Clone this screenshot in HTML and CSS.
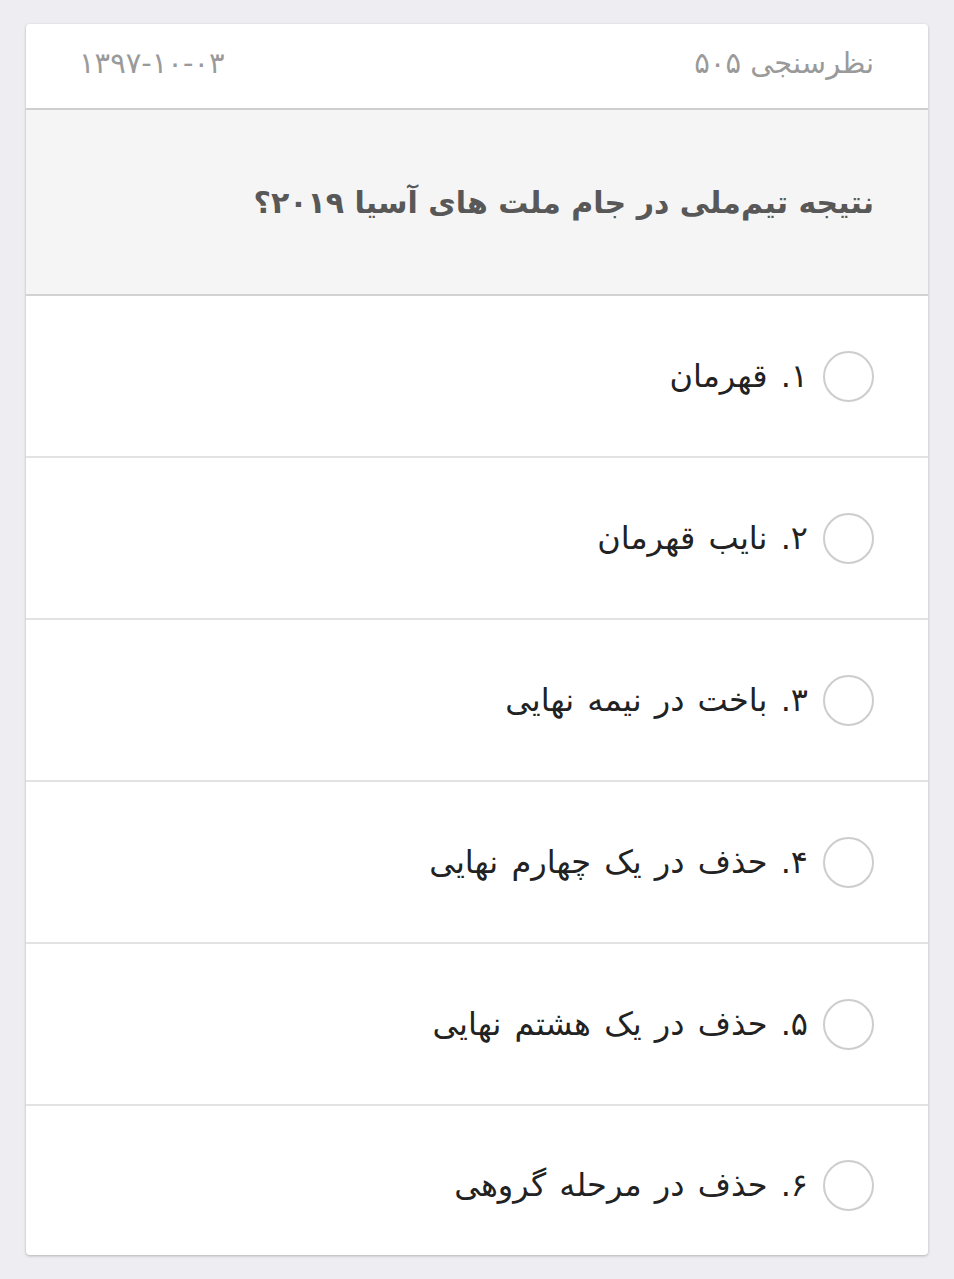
FILE: index.html
```html
<!DOCTYPE html>
<html lang="fa" dir="rtl">
<head>
    <meta charset="UTF-8">
    <meta name="viewport" content="width=device-width, initial-scale=1.0">
    <title>نظرسنجی ۵۰۵</title>
    <link rel="stylesheet" href="styles.css">
</head>
<body>
    <div class="card">
        <div class="card-header">
            <span class="poll-title">نظرسنجی ۵۰۵</span>
            <span class="poll-date">۱۳۹۷-۱۰-۰۳</span>
        </div>

        <div class="question">
            <h2>نتیجه تیم‌ملی در جام ملت های آسیا ۲۰۱۹؟</h2>
        </div>

        <ul class="options">
            <li class="option"><span class="radio"></span><span class="label">۱. قهرمان</span></li>
            <li class="option"><span class="radio"></span><span class="label">۲. نایب قهرمان</span></li>
            <li class="option"><span class="radio"></span><span class="label">۳. باخت در نیمه نهایی</span></li>
            <li class="option"><span class="radio"></span><span class="label">۴. حذف در یک چهارم نهایی</span></li>
            <li class="option"><span class="radio"></span><span class="label">۵. حذف در یک هشتم نهایی</span></li>
            <li class="option"><span class="radio"></span><span class="label">۶. حذف در مرحله گروهی</span></li>
        </ul>
    </div>
</body>
</html>
```

FILE: styles.css
```css
* {
    box-sizing: border-box;
    margin: 0;
    padding: 0;
    font-family: "DejaVu Sans", "Noto Sans", sans-serif;
}

body {
    background: #eeeef2;
    padding: 24px 26px;
}

.card {
    background: #fff;
    border-radius: 4px;
    box-shadow: 0 1px 3px rgba(0, 0, 0, 0.25);
    overflow: hidden;
}

.card-header {
    height: 86px;
    display: flex;
    justify-content: space-between;
    align-items: center;
    padding: 0 54px 6px 53px;
    border-bottom: 2px solid #cfcfcf;
    color: #9a9a9a;
    font-size: 29px;
}

.poll-date {
    letter-spacing: 1px;
}

.question {
    height: 186px;
    background: #f5f5f5;
    display: flex;
    align-items: center;
    padding: 0 54px;
    border-bottom: 2px solid #d2d2d2;
}

.question h2 {
    font-size: 30px;
    font-weight: bold;
    color: #585858;
}

.options {
    list-style: none;
}

.option {
    height: 162px;
    display: flex;
    align-items: center;
    gap: 15px;
    padding: 0 54px;
    border-bottom: 2px solid #e2e2e2;
}

.option:last-child {
    height: 149px;
    padding-top: 9px;
    border-bottom: none;
}

.radio {
    width: 51px;
    height: 51px;
    border: 2px solid #cdcdcd;
    border-radius: 50%;
    flex-shrink: 0;
}

.label {
    font-size: 32px;
    word-spacing: 3px;
    color: #222;
}
```
